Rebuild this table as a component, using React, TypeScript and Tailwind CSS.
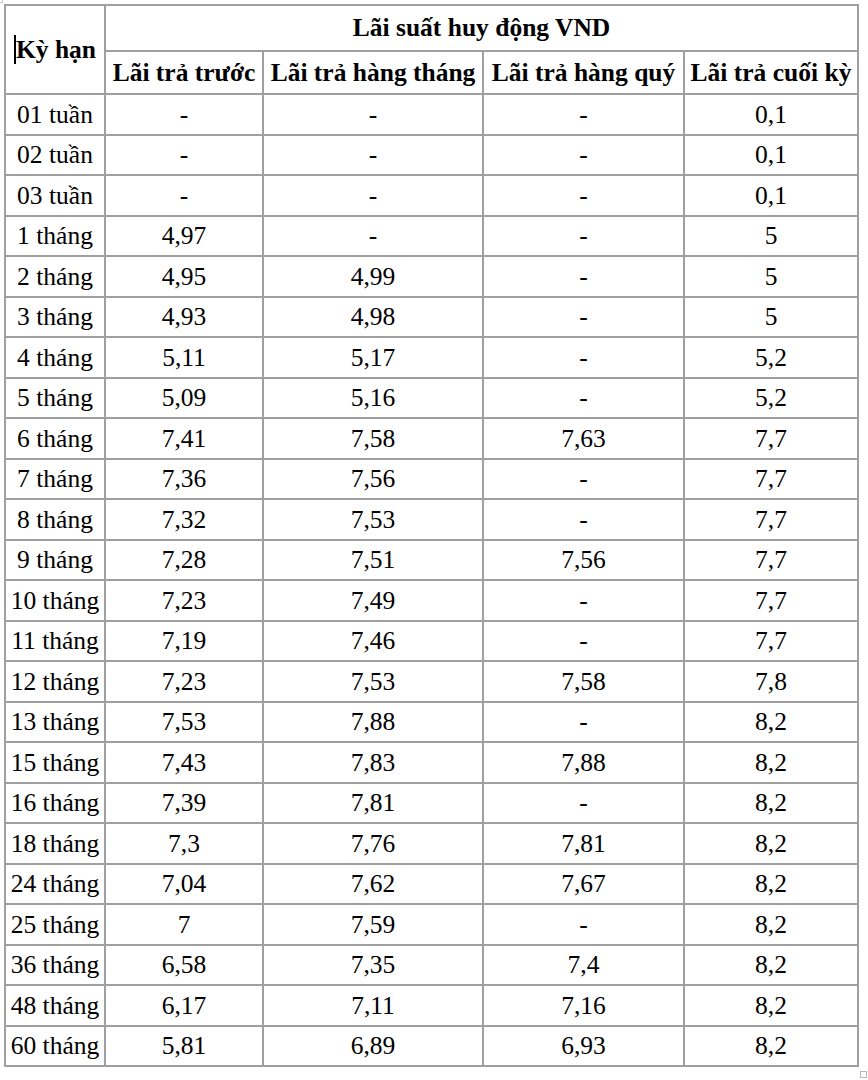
import React from "react";

const rows: [string, string, string, string, string][] = [
    ["01 tuần", "-", "-", "-", "0,1"],
    ["02 tuần", "-", "-", "-", "0,1"],
    ["03 tuần", "-", "-", "-", "0,1"],
    ["1 tháng", "4,97", "-", "-", "5"],
    ["2 tháng", "4,95", "4,99", "-", "5"],
    ["3 tháng", "4,93", "4,98", "-", "5"],
    ["4 tháng", "5,11", "5,17", "-", "5,2"],
    ["5 tháng", "5,09", "5,16", "-", "5,2"],
    ["6 tháng", "7,41", "7,58", "7,63", "7,7"],
    ["7 tháng", "7,36", "7,56", "-", "7,7"],
    ["8 tháng", "7,32", "7,53", "-", "7,7"],
    ["9 tháng", "7,28", "7,51", "7,56", "7,7"],
    ["10 tháng", "7,23", "7,49", "-", "7,7"],
    ["11 tháng", "7,19", "7,46", "-", "7,7"],
    ["12 tháng", "7,23", "7,53", "7,58", "7,8"],
    ["13 tháng", "7,53", "7,88", "-", "8,2"],
    ["15 tháng", "7,43", "7,83", "7,88", "8,2"],
    ["16 tháng", "7,39", "7,81", "-", "8,2"],
    ["18 tháng", "7,3", "7,76", "7,81", "8,2"],
    ["24 tháng", "7,04", "7,62", "7,67", "8,2"],
    ["25 tháng", "7", "7,59", "-", "8,2"],
    ["36 tháng", "6,58", "7,35", "7,4", "8,2"],
    ["48 tháng", "6,17", "7,11", "7,16", "8,2"],
    ["60 tháng", "5,81", "6,89", "6,93", "8,2"],
];

const cell = "border-2 border-[#a0a0a0] p-0 text-center align-middle whitespace-nowrap";

export default function App() {
    return (
        <div className="relative min-h-screen bg-white pt-[4px] pl-[4px] font-[family-name:'Liberation_Serif','Times_New_Roman',serif] text-[25.5px] leading-none text-black">
            {/* table resize handles */}
            <div className="absolute left-0 top-[2px] w-[3px] border-t border-[#c8c8c8]" />
            <div className="absolute left-[2px] top-0 h-[3px] border-l border-[#c8c8c8]" />
            <div className="absolute left-[860px] top-[1071px] w-[7px] h-[7px] border border-[#b8b8b8]" />

            <table className="table-fixed border-collapse">
                <colgroup>
                    <col className="w-[100px]" />
                    <col className="w-[158px]" />
                    <col className="w-[220px]" />
                    <col className="w-[201px]" />
                    <col className="w-[174px]" />
                </colgroup>
                <thead>
                    <tr className="h-[46px]">
                        <th rowSpan={2} className={`${cell} font-bold`}>
                            <span className="inline-block w-[2px] h-[29px] bg-black align-[-6px]" />
                            Kỳ hạn
                        </th>
                        <th colSpan={4} className={`${cell} font-bold`}>
                            Lãi suất huy động VND
                        </th>
                    </tr>
                    <tr className="h-[43px]">
                        <th className={`${cell} font-bold`}>Lãi trả trước</th>
                        <th className={`${cell} font-bold`}>Lãi trả hàng tháng</th>
                        <th className={`${cell} font-bold`}>Lãi trả hàng quý</th>
                        <th className={`${cell} font-bold`}>Lãi trả cuối kỳ</th>
                    </tr>
                </thead>
                <tbody>
                    {rows.map((r) => (
                        <tr key={r[0]} className="h-[40.5px]">
                            {r.map((v, i) => (
                                <td key={i} className={`${cell} font-normal`}>
                                    {v}
                                </td>
                            ))}
                        </tr>
                    ))}
                </tbody>
            </table>
        </div>
    );
}
